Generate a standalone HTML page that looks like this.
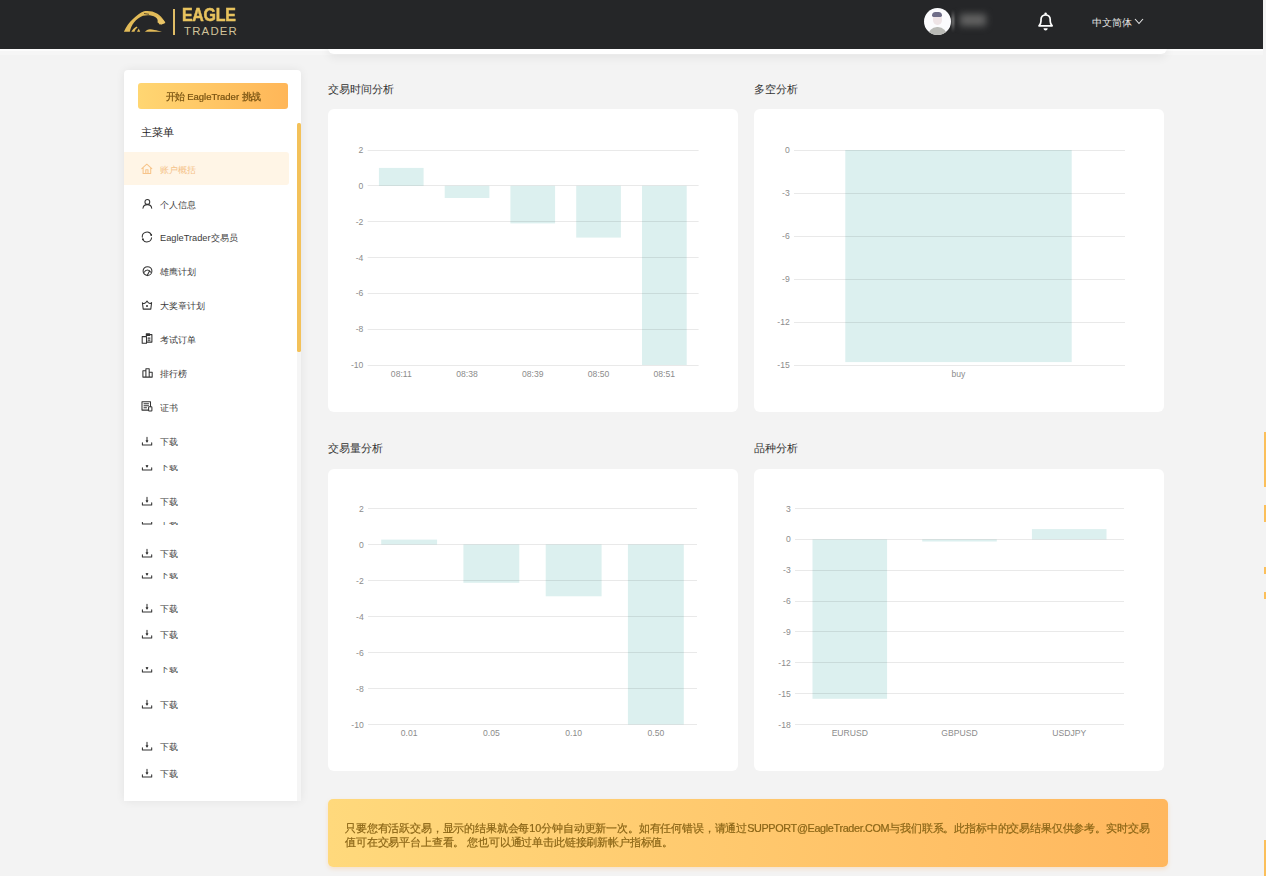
<!DOCTYPE html>
<html><head><meta charset="utf-8">
<style>
*{margin:0;padding:0;box-sizing:border-box}
html,body{width:1266px;height:876px;overflow:hidden;background:#f3f3f3;font-family:"Liberation Sans", sans-serif;}
.abs{position:absolute}
#hdr{position:absolute;left:0;top:0;width:1263px;height:48.5px;background:#252628;}
.card{position:absolute;background:#fff;border-radius:6px;}
.title{position:absolute;font-size:10.5px;color:#333;line-height:12px;}
#side{position:absolute;left:124px;top:69.5px;width:177px;height:731px;background:#fff;border-radius:4px 4px 0 0;box-shadow:0 0 10px rgba(0,0,0,0.07)}
.mi{position:absolute;left:142px;height:12px;display:flex;align-items:center;white-space:nowrap;font-size:9.25px;color:#444;}
.ic{position:absolute;width:12px;height:12px} .ic svg{display:block} .mt{position:absolute;height:12px;line-height:12px;white-space:nowrap;font-size:9.25px;color:#3c3c3c}
.clip{position:absolute;left:124px;width:170px;overflow:hidden;}
</style></head><body>
<div class="abs" style="left:0;top:48px;width:1263px;height:2.5px;background:#fcfcfc"></div><div class="abs" style="left:0;top:50.5px;width:1263px;height:4px;background:#f6f6f6"></div><div id="topcard" class="abs" style="left:328px;top:40px;width:839px;height:14px;background:#fff;border-radius:0 0 6px 6px;box-shadow:0 4px 10px rgba(0,0,0,0.06)"></div>
<div id="hdr">
  <svg class="abs" style="left:120px;top:6px" width="50" height="30" viewBox="0 0 50 30">
    <path d="M3.9 25.8 C6 21 9 16 13.5 12.5 C17 9.5 20 6.5 24 5.2 C28 4.5 33 5 37 7.5 C40 9.5 42.5 12 44 14.5 L45.3 16.8 C43.5 17.2 41.5 17.8 39.5 18.6 L38.5 17 C39.5 15.5 38 13 35.5 11.2 C32 9 27 8.8 23 9.8 C19.5 11 16.5 13.5 14 16.5 C12 19 10.5 22.5 9.8 25.8 Z" fill="#e2bb58"/>
    <path d="M36 10 C39.5 11 42.5 13 44.5 15.5 L45.3 17 L41 18.8 C40 17.5 38.5 16.8 37.5 16.5 C38 14.5 37.5 12 36 10 Z" fill="#e8c468"/>
    <path d="M11.3 25.8 C12.5 23.5 14.3 21.5 16.8 20.5 L17.5 21.8 C15.8 22.8 14.8 24.3 14.5 25.8 Z" fill="#e2bb58"/>
    <path d="M17 25.8 L18.7 22.4 L20.2 25.8 Z" fill="#e2bb58"/>
    <path d="M24.8 25.8 C26 24.5 28 23.2 30 23.2 C33 23.4 36 24.2 38 24.8 C39.5 25.2 41 25.5 42 25.8 Z" fill="#e2bb58"/>
    <path d="M24 7.5 L29 8.3" stroke="#3a3020" stroke-width="0.8"/>
  </svg>
  <div class="abs" style="left:173px;top:9px;width:1.6px;height:26px;background:#e0bd66"></div>
  <div class="abs" style="left:182px;top:5px;font-size:17.5px;font-weight:bold;color:#e8c35e;-webkit-text-stroke:0.5px #e8c35e;letter-spacing:-0.3px;line-height:20px;transform:scaleX(0.91);transform-origin:0 0">EAGLE</div>
  <div class="abs" style="left:184px;top:24.5px;font-size:11.4px;color:#d2c39a;letter-spacing:1.2px;line-height:12px">TRADER</div>
  <div class="abs" style="left:923.5px;top:7.8px;width:27.5px;height:27.5px;border-radius:50%;background:#fbfbfd;overflow:hidden">
    <div class="abs" style="left:9px;top:6px;width:9.5px;height:11px;border-radius:45%;background:#eee4e6"></div>
    <div class="abs" style="left:8.6px;top:4px;width:10.4px;height:5.5px;border-radius:5px 5px 2px 2px;background:#6f6d88"></div>
    <div class="abs" style="left:4px;top:19.5px;width:19.5px;height:12px;border-radius:9px 9px 0 0;background:#b9bab6"></div>
  </div>
  <div class="abs" style="left:951px;top:7px;width:42px;height:28px;overflow:hidden">
    <div class="abs" style="left:9px;top:7px;width:26px;height:12px;background:#626262;filter:blur(3.5px)"></div>
    <div class="abs" style="left:0.5px;top:3px;width:2px;height:22px;background:linear-gradient(180deg,rgba(150,150,150,0),#8a8a8a 40%,#8a8a8a 60%,rgba(150,150,150,0));filter:blur(0.8px)"></div>
  </div>
  <svg class="abs" style="left:1036px;top:10px" width="20" height="22" viewBox="0 0 20 22">
    <circle cx="9.6" cy="3.6" r="1.2" fill="#fff"/>
    <path d="M3 15.8 C4.6 14.4 5 13 5 11 V9.6 C5 6.8 7 4.9 9.6 4.9 C12.2 4.9 14.2 6.8 14.2 9.6 V11 C14.2 13 14.6 14.4 16.2 15.8 Z" stroke="#fff" stroke-width="1.7" fill="none" stroke-linejoin="round"/>
    <path d="M7.5 18.2 H11.7 C11.5 19.7 10.7 20.4 9.6 20.4 C8.5 20.4 7.7 19.7 7.5 18.2 Z" fill="#fff"/>
  </svg>
  <div class="abs" style="left:1092px;top:17px;font-size:9.8px;color:#e6e6e6;line-height:12px;white-space:nowrap">中文简体</div>
  <svg class="abs" style="left:1134px;top:18px" width="10" height="7" viewBox="0 0 10 7"><path d="M1 1 L5 5.5 L9 1" stroke="#e6e6e6" stroke-width="1.1" fill="none"/></svg>
</div>

<div id="side"></div>
<div class="abs" style="left:297.3px;top:352px;width:3.9px;height:448.5px;background:#f5f5f5"></div><div class="abs" style="left:297.4px;top:122.6px;width:3.8px;height:229px;background:#f3c159;border-radius:1.5px"></div>
<div class="abs" style="left:138px;top:83px;width:150px;height:26px;border-radius:3px;background:linear-gradient(90deg,#ffd672,#ffb658)"></div><div class="abs" style="left:138px;top:83px;width:150px;height:26px;line-height:24.5px;text-align:center;white-space:nowrap"><span style="display:inline-block;font-size:10px;color:#7a5412;-webkit-text-stroke:0.25px #7a5412;transform:scale(0.95)">开始 EagleTrader 挑战</span></div>
<div class="abs" style="left:140.8px;top:124.8px;font-size:10.6px;color:#222;line-height:14px">主菜单</div>
<div class="abs" style="left:124px;top:152.2px;width:164.5px;height:33px;background:#fff5e6;border-radius:0 3px 3px 0"></div>
<div class="ic" style="left:141px;top:163.4px"><svg width="12" height="12" viewBox="0 0 12 12"><path d="M0.8 5.6 L5.8 1.2 L10.8 5.6 M2.1 4.5 V10.5 H9.7 V4.5 M4.8 10.5 V6.8 H7 V10.5" stroke="#f7c48a" stroke-width="1.05" fill="none" stroke-linecap="round" stroke-linejoin="round"/></svg></div><div class="mt" style="left:160px;top:164.4px;color:#f5c38a">账户概括</div><div class="ic" style="left:141px;top:197.8px"><svg width="12" height="12" viewBox="0 0 12 12"><circle cx="6.35" cy="3.9" r="2.4" stroke="#333" stroke-width="1.05" fill="none" stroke-linecap="round" stroke-linejoin="round"/><path d="M2 10.2 C2.3 7.6 4 6.6 6.35 6.6 C8.7 6.6 10.4 7.6 10.7 10.2" stroke="#333" stroke-width="1.05" fill="none" stroke-linecap="round" stroke-linejoin="round"/></svg></div><div class="mt" style="left:160px;top:198.8px;color:#3c3c3c">个人信息</div><div class="ic" style="left:141px;top:231.4px"><svg width="12" height="12" viewBox="0 0 12 12"><path d="M1.3 6.2 A4.7 4.7 0 0 1 10.3 3.9 M10.6 6.8 A4.7 4.7 0 0 1 1.8 8.4" stroke="#333" stroke-width="1.05" fill="none" stroke-linecap="round" stroke-linejoin="round"/><circle cx="10.2" cy="4" r="0.95" fill="#333"/><circle cx="1.9" cy="8.3" r="0.95" fill="#333"/></svg></div><div class="mt" style="left:160px;top:232.4px;color:#3c3c3c">EagleTrader交易员</div><div class="ic" style="left:141px;top:265.4px"><svg width="12" height="12" viewBox="0 0 12 12"><g transform="translate(0,0.8)"><circle cx="6.5" cy="5.3" r="4.4" stroke="#333" stroke-width="1.05" fill="none" stroke-linecap="round" stroke-linejoin="round"/><path d="M3.4 6.3 A3.3 3.3 0 0 1 9.6 6.3 M6.2 9.8 L8.5 5.2" stroke="#333" stroke-width="1.05" fill="none" stroke-linecap="round" stroke-linejoin="round"/></g></svg></div><div class="mt" style="left:160px;top:266.4px;color:#3c3c3c">雄鹰计划</div><div class="ic" style="left:141px;top:299.4px"><svg width="12" height="12" viewBox="0 0 12 12"><path d="M1.4 3.8 Q3.6 5.8 6 2 Q8.4 5.8 10.6 3.6 L9.8 10.1 H2.2 Z" stroke="#333" stroke-width="1.05" fill="none" stroke-linecap="round" stroke-linejoin="round"/><circle cx="6" cy="7.1" r="1" fill="#333"/></svg></div><div class="mt" style="left:160px;top:300.4px;color:#3c3c3c">大奖章计划</div><div class="ic" style="left:141px;top:333.4px"><svg width="12" height="12" viewBox="0 0 12 12"><path d="M5.5 1.6 H10.9 V9.1 H5.5 M5.3 0.8 H8.5 V2.4 H5.3 Z M1.2 3.6 H5.5 V10.3 H1.2 Z M7 5.1 H9 M7 7.1 H9" stroke="#333" stroke-width="1.05" fill="none" stroke-linecap="round" stroke-linejoin="round"/></svg></div><div class="mt" style="left:160px;top:334.4px;color:#3c3c3c">考试订单</div><div class="ic" style="left:141px;top:367.4px"><svg width="12" height="12" viewBox="0 0 12 12"><path d="M1.9 10.1 V3.8 H4.9 V10.1 Z M4.9 10.1 V1.8 H8.2 V10.1 Z M8.2 10.1 V5.2 H11.2 V10.1 Z" stroke="#333" stroke-width="1.05" fill="none" stroke-linecap="round" stroke-linejoin="round"/></svg></div><div class="mt" style="left:160px;top:368.4px;color:#3c3c3c">排行榜</div><div class="ic" style="left:141px;top:401.4px"><svg width="12" height="12" viewBox="0 0 12 12"><path d="M7.5 9.1 H1 V0.8 H9.5 V5.6 M3 2.8 H7.5 M3 4.8 H7.5 M3 6.8 H5.5" stroke="#333" stroke-width="1.05" fill="none" stroke-linecap="round" stroke-linejoin="round"/><rect x="7.6" y="5.8" width="3.3" height="4.2" rx="0.6" stroke="#333" stroke-width="1.05" fill="none" stroke-linecap="round" stroke-linejoin="round"/></svg></div><div class="mt" style="left:160px;top:402.4px;color:#3c3c3c">证书</div><div class="ic" style="left:141px;top:435.0px"><svg width="12" height="12" viewBox="0 0 12 12"><path d="M6 2.2 V6.5 M1.4 7.7 V9.9 H10.7 V7.7" stroke="#333" stroke-width="1.05" fill="none" stroke-linecap="round" stroke-linejoin="round"/><path d="M4.9 5.6 L6 7.4 L7.1 5.6 Z" fill="#333" stroke="#333" stroke-width="0.5" stroke-linejoin="round"/></svg></div><div class="mt" style="left:160px;top:436.0px;color:#3c3c3c">下载</div><div class="ic" style="left:141px;top:495.0px"><svg width="12" height="12" viewBox="0 0 12 12"><path d="M6 2.2 V6.5 M1.4 7.7 V9.9 H10.7 V7.7" stroke="#333" stroke-width="1.05" fill="none" stroke-linecap="round" stroke-linejoin="round"/><path d="M4.9 5.6 L6 7.4 L7.1 5.6 Z" fill="#333" stroke="#333" stroke-width="0.5" stroke-linejoin="round"/></svg></div><div class="mt" style="left:160px;top:496.0px;color:#3c3c3c">下载</div><div class="ic" style="left:141px;top:547.0px"><svg width="12" height="12" viewBox="0 0 12 12"><path d="M6 2.2 V6.5 M1.4 7.7 V9.9 H10.7 V7.7" stroke="#333" stroke-width="1.05" fill="none" stroke-linecap="round" stroke-linejoin="round"/><path d="M4.9 5.6 L6 7.4 L7.1 5.6 Z" fill="#333" stroke="#333" stroke-width="0.5" stroke-linejoin="round"/></svg></div><div class="mt" style="left:160px;top:548.0px;color:#3c3c3c">下载</div><div class="ic" style="left:141px;top:602.0px"><svg width="12" height="12" viewBox="0 0 12 12"><path d="M6 2.2 V6.5 M1.4 7.7 V9.9 H10.7 V7.7" stroke="#333" stroke-width="1.05" fill="none" stroke-linecap="round" stroke-linejoin="round"/><path d="M4.9 5.6 L6 7.4 L7.1 5.6 Z" fill="#333" stroke="#333" stroke-width="0.5" stroke-linejoin="round"/></svg></div><div class="mt" style="left:160px;top:603.0px;color:#3c3c3c">下载</div><div class="ic" style="left:141px;top:628.2px"><svg width="12" height="12" viewBox="0 0 12 12"><path d="M6 2.2 V6.5 M1.4 7.7 V9.9 H10.7 V7.7" stroke="#333" stroke-width="1.05" fill="none" stroke-linecap="round" stroke-linejoin="round"/><path d="M4.9 5.6 L6 7.4 L7.1 5.6 Z" fill="#333" stroke="#333" stroke-width="0.5" stroke-linejoin="round"/></svg></div><div class="mt" style="left:160px;top:629.2px;color:#3c3c3c">下载</div><div class="ic" style="left:141px;top:698.0px"><svg width="12" height="12" viewBox="0 0 12 12"><path d="M6 2.2 V6.5 M1.4 7.7 V9.9 H10.7 V7.7" stroke="#333" stroke-width="1.05" fill="none" stroke-linecap="round" stroke-linejoin="round"/><path d="M4.9 5.6 L6 7.4 L7.1 5.6 Z" fill="#333" stroke="#333" stroke-width="0.5" stroke-linejoin="round"/></svg></div><div class="mt" style="left:160px;top:699.0px;color:#3c3c3c">下载</div><div class="ic" style="left:141px;top:740.4px"><svg width="12" height="12" viewBox="0 0 12 12"><path d="M6 2.2 V6.5 M1.4 7.7 V9.9 H10.7 V7.7" stroke="#333" stroke-width="1.05" fill="none" stroke-linecap="round" stroke-linejoin="round"/><path d="M4.9 5.6 L6 7.4 L7.1 5.6 Z" fill="#333" stroke="#333" stroke-width="0.5" stroke-linejoin="round"/></svg></div><div class="mt" style="left:160px;top:741.4px;color:#3c3c3c">下载</div><div class="ic" style="left:141px;top:767.2px"><svg width="12" height="12" viewBox="0 0 12 12"><path d="M6 2.2 V6.5 M1.4 7.7 V9.9 H10.7 V7.7" stroke="#333" stroke-width="1.05" fill="none" stroke-linecap="round" stroke-linejoin="round"/><path d="M4.9 5.6 L6 7.4 L7.1 5.6 Z" fill="#333" stroke="#333" stroke-width="0.5" stroke-linejoin="round"/></svg></div><div class="mt" style="left:160px;top:768.2px;color:#3c3c3c">下载</div><div class="clip" style="top:465px;height:5.5px"><div class="ic" style="left:17px;top:-5.5px"><svg width="12" height="12" viewBox="0 0 12 12"><path d="M6 2.2 V6.5 M1.4 7.7 V9.9 H10.7 V7.7" stroke="#333" stroke-width="1.05" fill="none" stroke-linecap="round" stroke-linejoin="round"/><path d="M4.9 5.6 L6 7.4 L7.1 5.6 Z" fill="#333" stroke="#333" stroke-width="0.5" stroke-linejoin="round"/></svg></div><div class="mt" style="left:36px;top:-4.5px">下载</div></div><div class="clip" style="top:522px;height:2.5px"><div class="ic" style="left:17px;top:-8.5px"><svg width="12" height="12" viewBox="0 0 12 12"><path d="M6 2.2 V6.5 M1.4 7.7 V9.9 H10.7 V7.7" stroke="#333" stroke-width="1.05" fill="none" stroke-linecap="round" stroke-linejoin="round"/><path d="M4.9 5.6 L6 7.4 L7.1 5.6 Z" fill="#333" stroke="#333" stroke-width="0.5" stroke-linejoin="round"/></svg></div><div class="mt" style="left:36px;top:-7.5px">下载</div></div><div class="clip" style="top:573px;height:5.5px"><div class="ic" style="left:17px;top:-5.5px"><svg width="12" height="12" viewBox="0 0 12 12"><path d="M6 2.2 V6.5 M1.4 7.7 V9.9 H10.7 V7.7" stroke="#333" stroke-width="1.05" fill="none" stroke-linecap="round" stroke-linejoin="round"/><path d="M4.9 5.6 L6 7.4 L7.1 5.6 Z" fill="#333" stroke="#333" stroke-width="0.5" stroke-linejoin="round"/></svg></div><div class="mt" style="left:36px;top:-4.5px">下载</div></div><div class="clip" style="top:667px;height:6px"><div class="ic" style="left:17px;top:-5.5px"><svg width="12" height="12" viewBox="0 0 12 12"><path d="M6 2.2 V6.5 M1.4 7.7 V9.9 H10.7 V7.7" stroke="#333" stroke-width="1.05" fill="none" stroke-linecap="round" stroke-linejoin="round"/><path d="M4.9 5.6 L6 7.4 L7.1 5.6 Z" fill="#333" stroke="#333" stroke-width="0.5" stroke-linejoin="round"/></svg></div><div class="mt" style="left:36px;top:-4.5px">下载</div></div>

<div class="title" style="left:328px;top:83px">交易时间分析</div>
<div class="title" style="left:754px;top:83px">多空分析</div>
<div class="title" style="left:328px;top:442px">交易量分析</div>
<div class="title" style="left:754px;top:442px">品种分析</div>
<div class="card" style="left:328px;top:109px;width:410px;height:303px"></div>
<div class="card" style="left:754px;top:109px;width:410px;height:303px"></div>
<div class="card" style="left:328px;top:469px;width:410px;height:302px"></div>
<div class="card" style="left:754px;top:469px;width:410px;height:302px"></div>
<svg class="abs" style="left:0;top:0;font-family:"Liberation Sans", sans-serif" width="1266" height="876">
<text x="363.3" y="153.0" text-anchor="end" font-size="8.6" fill="#8c8c8c">2</text>
<text x="363.3" y="188.8" text-anchor="end" font-size="8.6" fill="#8c8c8c">0</text>
<text x="363.3" y="224.7" text-anchor="end" font-size="8.6" fill="#8c8c8c">-2</text>
<text x="363.3" y="260.5" text-anchor="end" font-size="8.6" fill="#8c8c8c">-4</text>
<text x="363.3" y="296.3" text-anchor="end" font-size="8.6" fill="#8c8c8c">-6</text>
<text x="363.3" y="332.2" text-anchor="end" font-size="8.6" fill="#8c8c8c">-8</text>
<text x="363.3" y="368.0" text-anchor="end" font-size="8.6" fill="#8c8c8c">-10</text>
<rect x="378.9" y="167.9" width="44.7" height="17.9" fill="#dcf0ef"/>
<text x="401.3" y="377.0" text-anchor="middle" font-size="8.6" fill="#8c8c8c">08:11</text>
<rect x="444.7" y="185.8" width="44.7" height="12.2" fill="#dcf0ef"/>
<text x="467.0" y="377.0" text-anchor="middle" font-size="8.6" fill="#8c8c8c">08:38</text>
<rect x="510.4" y="185.8" width="44.7" height="37.6" fill="#dcf0ef"/>
<text x="532.8" y="377.0" text-anchor="middle" font-size="8.6" fill="#8c8c8c">08:39</text>
<rect x="576.2" y="185.8" width="44.7" height="51.8" fill="#dcf0ef"/>
<text x="598.6" y="377.0" text-anchor="middle" font-size="8.6" fill="#8c8c8c">08:50</text>
<rect x="642.0" y="185.8" width="44.7" height="179.2" fill="#dcf0ef"/>
<text x="664.3" y="377.0" text-anchor="middle" font-size="8.6" fill="#8c8c8c">08:51</text>
<line x1="367.6" y1="150.5" x2="698.6" y2="150.5" stroke="rgba(0,0,0,0.085)" stroke-width="1"/>
<line x1="367.6" y1="185.5" x2="698.6" y2="185.5" stroke="rgba(0,0,0,0.085)" stroke-width="1"/>
<line x1="367.6" y1="221.5" x2="698.6" y2="221.5" stroke="rgba(0,0,0,0.085)" stroke-width="1"/>
<line x1="367.6" y1="257.5" x2="698.6" y2="257.5" stroke="rgba(0,0,0,0.085)" stroke-width="1"/>
<line x1="367.6" y1="293.5" x2="698.6" y2="293.5" stroke="rgba(0,0,0,0.085)" stroke-width="1"/>
<line x1="367.6" y1="329.5" x2="698.6" y2="329.5" stroke="rgba(0,0,0,0.085)" stroke-width="1"/>
<line x1="367.6" y1="365.5" x2="698.6" y2="365.5" stroke="rgba(0,0,0,0.085)" stroke-width="1"/><text x="789.7" y="153.0" text-anchor="end" font-size="8.6" fill="#8c8c8c">0</text>
<text x="789.7" y="196.0" text-anchor="end" font-size="8.6" fill="#8c8c8c">-3</text>
<text x="789.7" y="239.0" text-anchor="end" font-size="8.6" fill="#8c8c8c">-6</text>
<text x="789.7" y="282.0" text-anchor="end" font-size="8.6" fill="#8c8c8c">-9</text>
<text x="789.7" y="325.0" text-anchor="end" font-size="8.6" fill="#8c8c8c">-12</text>
<text x="789.7" y="368.0" text-anchor="end" font-size="8.6" fill="#8c8c8c">-15</text>
<rect x="845.3" y="150.0" width="226.4" height="212.1" fill="#dcf0ef"/>
<text x="958.5" y="377.0" text-anchor="middle" font-size="8.6" fill="#8c8c8c">buy</text>
<line x1="794" y1="150.5" x2="1125" y2="150.5" stroke="rgba(0,0,0,0.085)" stroke-width="1"/>
<line x1="794" y1="193.5" x2="1125" y2="193.5" stroke="rgba(0,0,0,0.085)" stroke-width="1"/>
<line x1="794" y1="236.5" x2="1125" y2="236.5" stroke="rgba(0,0,0,0.085)" stroke-width="1"/>
<line x1="794" y1="279.5" x2="1125" y2="279.5" stroke="rgba(0,0,0,0.085)" stroke-width="1"/>
<line x1="794" y1="322.5" x2="1125" y2="322.5" stroke="rgba(0,0,0,0.085)" stroke-width="1"/>
<line x1="794" y1="365.5" x2="1125" y2="365.5" stroke="rgba(0,0,0,0.085)" stroke-width="1"/><text x="363.7" y="511.5" text-anchor="end" font-size="8.6" fill="#8c8c8c">2</text>
<text x="363.7" y="547.5" text-anchor="end" font-size="8.6" fill="#8c8c8c">0</text>
<text x="363.7" y="583.5" text-anchor="end" font-size="8.6" fill="#8c8c8c">-2</text>
<text x="363.7" y="619.5" text-anchor="end" font-size="8.6" fill="#8c8c8c">-4</text>
<text x="363.7" y="655.5" text-anchor="end" font-size="8.6" fill="#8c8c8c">-6</text>
<text x="363.7" y="691.5" text-anchor="end" font-size="8.6" fill="#8c8c8c">-8</text>
<text x="363.7" y="727.5" text-anchor="end" font-size="8.6" fill="#8c8c8c">-10</text>
<rect x="381.2" y="539.6" width="55.9" height="4.9" fill="#dcf0ef"/>
<text x="409.1" y="735.7" text-anchor="middle" font-size="8.6" fill="#8c8c8c">0.01</text>
<rect x="463.4" y="544.5" width="55.9" height="38.3" fill="#dcf0ef"/>
<text x="491.4" y="735.7" text-anchor="middle" font-size="8.6" fill="#8c8c8c">0.05</text>
<rect x="545.7" y="544.5" width="55.9" height="51.8" fill="#dcf0ef"/>
<text x="573.6" y="735.7" text-anchor="middle" font-size="8.6" fill="#8c8c8c">0.10</text>
<rect x="627.9" y="544.5" width="55.9" height="180.0" fill="#dcf0ef"/>
<text x="655.9" y="735.7" text-anchor="middle" font-size="8.6" fill="#8c8c8c">0.50</text>
<line x1="368" y1="508.5" x2="697" y2="508.5" stroke="rgba(0,0,0,0.085)" stroke-width="1"/>
<line x1="368" y1="544.5" x2="697" y2="544.5" stroke="rgba(0,0,0,0.085)" stroke-width="1"/>
<line x1="368" y1="580.5" x2="697" y2="580.5" stroke="rgba(0,0,0,0.085)" stroke-width="1"/>
<line x1="368" y1="616.5" x2="697" y2="616.5" stroke="rgba(0,0,0,0.085)" stroke-width="1"/>
<line x1="368" y1="652.5" x2="697" y2="652.5" stroke="rgba(0,0,0,0.085)" stroke-width="1"/>
<line x1="368" y1="688.5" x2="697" y2="688.5" stroke="rgba(0,0,0,0.085)" stroke-width="1"/>
<line x1="368" y1="724.5" x2="697" y2="724.5" stroke="rgba(0,0,0,0.085)" stroke-width="1"/><text x="790.7" y="511.5" text-anchor="end" font-size="8.6" fill="#8c8c8c">3</text>
<text x="790.7" y="542.4" text-anchor="end" font-size="8.6" fill="#8c8c8c">0</text>
<text x="790.7" y="573.2" text-anchor="end" font-size="8.6" fill="#8c8c8c">-3</text>
<text x="790.7" y="604.1" text-anchor="end" font-size="8.6" fill="#8c8c8c">-6</text>
<text x="790.7" y="634.9" text-anchor="end" font-size="8.6" fill="#8c8c8c">-9</text>
<text x="790.7" y="665.8" text-anchor="end" font-size="8.6" fill="#8c8c8c">-12</text>
<text x="790.7" y="696.6" text-anchor="end" font-size="8.6" fill="#8c8c8c">-15</text>
<text x="790.7" y="727.5" text-anchor="end" font-size="8.6" fill="#8c8c8c">-18</text>
<rect x="812.5" y="539.4" width="74.6" height="159.4" fill="#dcf0ef"/>
<text x="849.8" y="735.7" text-anchor="middle" font-size="8.6" fill="#8c8c8c">EURUSD</text>
<rect x="922.2" y="539.4" width="74.6" height="2.1" fill="#dcf0ef"/>
<text x="959.5" y="735.7" text-anchor="middle" font-size="8.6" fill="#8c8c8c">GBPUSD</text>
<rect x="1031.9" y="529.1" width="74.6" height="10.3" fill="#dcf0ef"/>
<text x="1069.2" y="735.7" text-anchor="middle" font-size="8.6" fill="#8c8c8c">USDJPY</text>
<line x1="795" y1="508.5" x2="1124" y2="508.5" stroke="rgba(0,0,0,0.085)" stroke-width="1"/>
<line x1="795" y1="539.5" x2="1124" y2="539.5" stroke="rgba(0,0,0,0.085)" stroke-width="1"/>
<line x1="795" y1="570.5" x2="1124" y2="570.5" stroke="rgba(0,0,0,0.085)" stroke-width="1"/>
<line x1="795" y1="601.5" x2="1124" y2="601.5" stroke="rgba(0,0,0,0.085)" stroke-width="1"/>
<line x1="795" y1="631.5" x2="1124" y2="631.5" stroke="rgba(0,0,0,0.085)" stroke-width="1"/>
<line x1="795" y1="662.5" x2="1124" y2="662.5" stroke="rgba(0,0,0,0.085)" stroke-width="1"/>
<line x1="795" y1="693.5" x2="1124" y2="693.5" stroke="rgba(0,0,0,0.085)" stroke-width="1"/>
<line x1="795" y1="724.5" x2="1124" y2="724.5" stroke="rgba(0,0,0,0.085)" stroke-width="1"/>
</svg>

<div class="abs" style="left:328px;top:799px;width:840px;height:68px;border-radius:5px;background:linear-gradient(90deg,#ffd97c,#ffb75e);box-shadow:0 2px 4px rgba(255,170,80,0.25)"></div>
<div class="abs" style="left:344.5px;top:820.5px;font-size:11px;line-height:14.2px;color:#8a6516;-webkit-text-stroke:0.2px #8a6516;white-space:nowrap;transform:scale(0.985);transform-origin:0 0">只要您有活跃交易，显示的结果就会每10分钟自动更新一次。如有任何错误，请通过<span style="letter-spacing:-0.35px">SUPPORT@EagleTrader.COM</span>与我们联系。此指标中的交易结果仅供参考。实时交易<br>值可在交易平台上查看。 您也可以通过单击此链接刷新帐户指标值。</div>

<div class="abs" style="left:1263.6px;top:431.8px;width:3px;height:55.2px;background:#fbbf5a"></div>
<div class="abs" style="left:1263.8px;top:505px;width:3px;height:17px;background:#fbbf5a"></div>
<div class="abs" style="left:1263.8px;top:567.4px;width:3px;height:6.6px;background:#fbbf5a"></div>
<div class="abs" style="left:1263.8px;top:591.7px;width:3px;height:7.3px;background:#fbbf5a"></div>
<div class="abs" style="left:1263.6px;top:839.8px;width:3px;height:37px;background:#fbbf5a"></div>
</body></html>
